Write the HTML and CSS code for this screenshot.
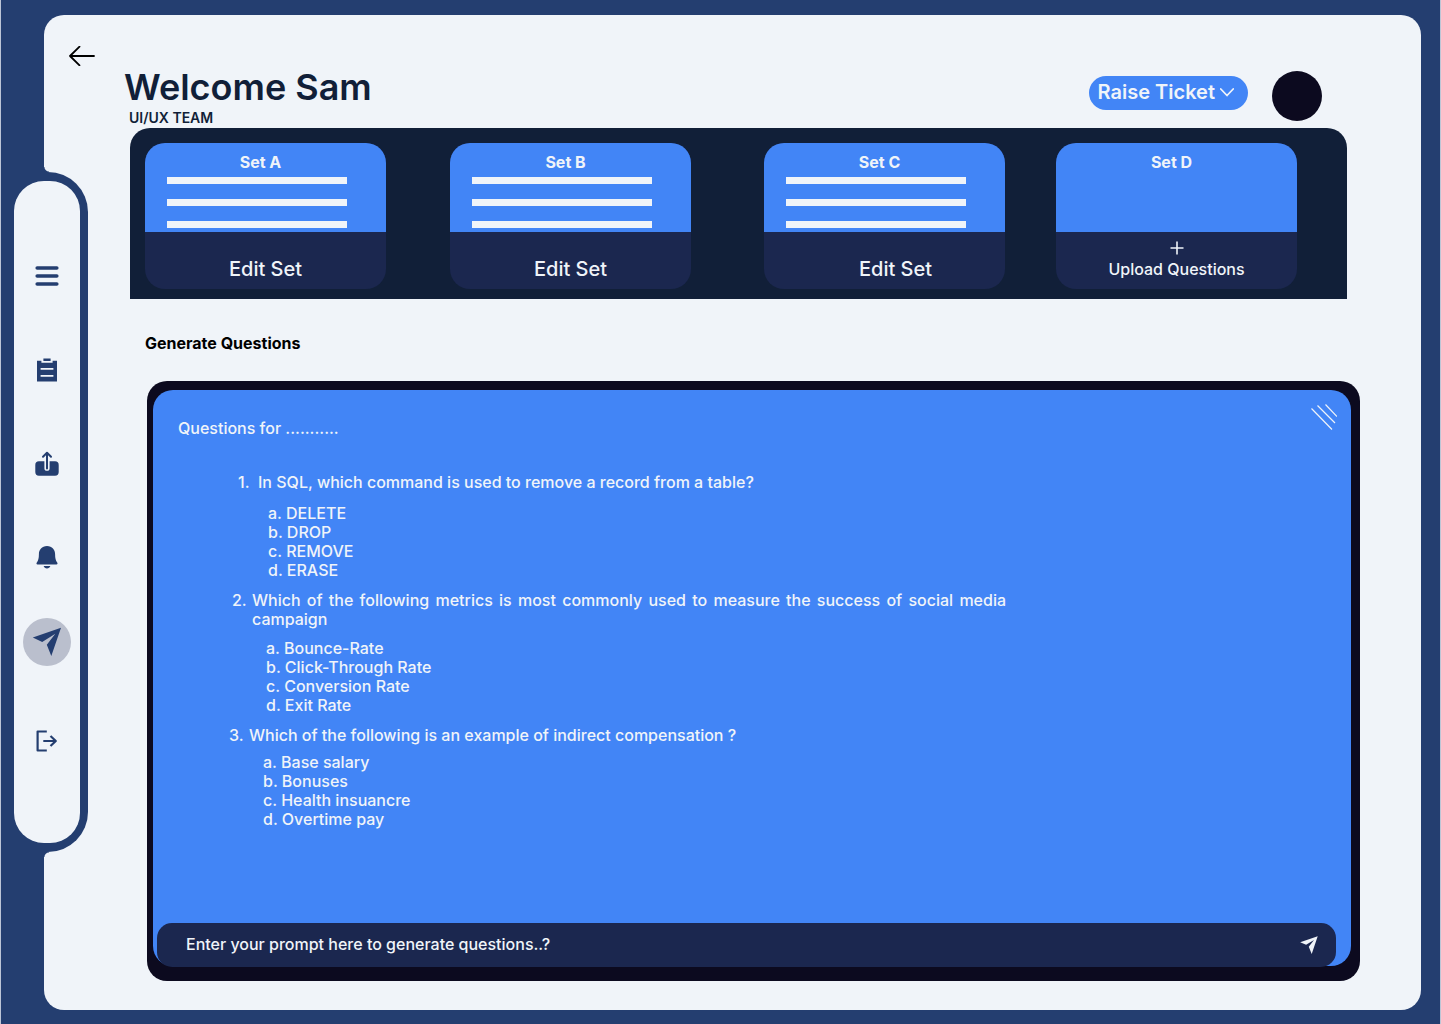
FILE: index.html
```html
<!DOCTYPE html>
<html lang="en">
<head>
  <meta charset="utf-8">
  <meta name="viewport" content="width=device-width, initial-scale=1">
  <title>Generate Questions</title>
  <link rel="stylesheet" href="styles.css">
</head>
<body>
  <div class="shell">
    <nav class="sidebar" aria-label="Main">
      <div class="sidebar-pill">
        <div class="nav-group">
          <button class="nav-item" type="button" aria-label="Menu">
            <svg width="24" height="24" viewBox="0 0 24 24"><path d="M2.2 4h19.6M2.2 12h19.6M2.2 20h19.6" fill="none" stroke="currentColor" stroke-width="3.6" stroke-linecap="round"/></svg>
          </button>
          <button class="nav-item" type="button" aria-label="Tests">
            <svg width="24" height="24" viewBox="0 0 24 24"><path d="M8.4.6h7.2V3H8.400zM2 2.800h4.400v1.900h11.200V2.800H22v20.800H2zM5.600 9.900v1.800h12.800V9.900zM5.600 17v1.800h12.800V17z" fill="currentColor" fill-rule="evenodd"/></svg>
          </button>
          <button class="nav-item" type="button" aria-label="Share">
            <svg width="24" height="26" viewBox="0 0 24 26"><path d="M4 10.200h5.400v7a2.600 2.600 0 0 0 5.200 0v-7H20a3.700 3.700 0 0 1 3.700 3.700v7.200A3.700 3.700 0 0 1 20 24.800H4a3.700 3.700 0 0 1-3.700-3.700v-7.200A3.700 3.700 0 0 1 4 10.200z" fill="currentColor"/><path d="M12 17.400V2.400M8 5.800l4-4 4 4" fill="none" stroke="currentColor" stroke-width="2" stroke-linecap="round" stroke-linejoin="round"/></svg>
          </button>
          <button class="nav-item" type="button" aria-label="Notifications">
            <svg width="22" height="24" viewBox="0 0 22 24"><path d="M11 0C5.800 0 2.900 3.700 2.900 8.300c0 4-.6 6.200-2.100 8.200-.6.900-.4 2 .7 2h19c1.100 0 1.300-1.100.7-2-1.500-2-2.100-4.200-2.100-8.200C19.100 3.700 16.200 0 11 0zM7.600 20h6.800c-.5 1.400-1.800 2.400-3.400 2.400s-2.900-1-3.400-2.400z" fill="currentColor"/></svg>
          </button>
        </div>
        <div class="nav-group nav-group-end">
          <button class="nav-item nav-item-active" type="button" aria-label="Generate">
            <svg width="30" height="30" viewBox="0 0 30 30"><path d="M29 .8.8 10.400l9.400 4.500L23.300 6.800 14.800 17.800l4.500 11.200z" fill="currentColor"/></svg>
          </button>
          <button class="nav-item" type="button" aria-label="Log out">
            <svg width="22" height="22" viewBox="0 0 22 22"><path d="M10.800 1.500H1.600v19h9.200M7.300 11H20M14.500 6l5.300 5-5.300 5" fill="none" stroke="currentColor" stroke-width="2.200" stroke-linejoin="round"/></svg>
          </button>
        </div>
      </div>
    </nav>

    <main class="panel">
      <div class="back-row">
        <button class="back" type="button" aria-label="Back">
          <svg width="26" height="20" viewBox="0 0 26 20"><path d="M25 10H1M10.500.700 1 10l9.500 9.300" fill="none" stroke="currentColor" stroke-width="1.800" stroke-linecap="round" stroke-linejoin="round"/></svg>
        </button>
      </div>

      <header class="header">
        <div>
          <h1 class="title">Welcome Sam</h1>
          <p class="team">UI/UX TEAM</p>
        </div>
        <div class="actions">
          <button class="ticket" type="button">Raise Ticket
            <svg width="14" height="9" viewBox="0 0 14 9"><path d="M.8 1 7 7.500 13.200 1" fill="none" stroke="currentColor" stroke-width="1.800" stroke-linecap="round" stroke-linejoin="round"/></svg>
          </button>
          <button class="avatar" type="button" aria-label="Account"></button>
        </div>
      </header>

      <section class="sets" aria-label="Question sets">
        <article class="card">
          <div class="card-top">
            <h2 class="card-title">Set A</h2>
            <div class="line"></div><div class="line"></div><div class="line"></div>
          </div>
          <button class="card-action" type="button">Edit Set</button>
        </article>
        <article class="card">
          <div class="card-top">
            <h2 class="card-title">Set B</h2>
            <div class="line"></div><div class="line"></div><div class="line"></div>
          </div>
          <button class="card-action" type="button">Edit Set</button>
        </article>
        <article class="card">
          <div class="card-top">
            <h2 class="card-title">Set C</h2>
            <div class="line"></div><div class="line"></div><div class="line"></div>
          </div>
          <button class="card-action card-action-shifted" type="button">Edit Set</button>
        </article>
        <article class="card">
          <div class="card-top">
            <h2 class="card-title">Set D</h2>
          </div>
          <button class="card-action card-action-upload" type="button">
            <svg width="14" height="14" viewBox="0 0 14 14"><path d="M7 .5v13M.5 7h13" fill="none" stroke="currentColor" stroke-width="1.600"/></svg>
            Upload Questions
          </button>
        </article>
      </section>

      <h2 class="section-title">Generate Questions</h2>

      <section class="chat">
        <div class="chat-body">
          <div class="chat-head">
            <p class="chat-label">Questions for ...........</p>
            <svg width="26" height="26" viewBox="0 0 26 26"><path d="M.5 4.500 21 25.500M6.500 1.500 24 19M14.500.5l11.500 12" fill="none" stroke="currentColor" stroke-width="1.200"/></svg>
          </div>
          <ol class="questions">
            <li class="question question-first">
              <p class="prompt-text"><span>1.</span><span>In SQL, which command is used to remove a record from a table?</span></p>
              <ul class="options">
                <li>a. DELETE</li>
                <li>b. DROP</li>
                <li>c. REMOVE</li>
                <li>d. ERASE</li>
              </ul>
            </li>
            <li class="question question-second">
              <p class="prompt-text"><span>2.</span><span>Which of the following metrics is most commonly used to measure the success of social media campaign</span></p>
              <ul class="options">
                <li>a. Bounce-Rate</li>
                <li>b. Click-Through Rate</li>
                <li>c. Conversion Rate</li>
                <li>d. Exit Rate</li>
              </ul>
            </li>
            <li class="question">
              <p class="prompt-text"><span>3.</span><span>Which of the following is an example of indirect compensation ?</span></p>
              <ul class="options">
                <li>a. Base salary</li>
                <li>b. Bonuses</li>
                <li>c. Health insuancre</li>
                <li>d. Overtime pay</li>
              </ul>
            </li>
          </ol>
          <form class="composer">
            <input class="composer-input" type="text" aria-label="Prompt" placeholder="Enter your prompt here to generate questions..?">
            <button class="send" type="button" aria-label="Send">
              <svg width="18" height="18" viewBox="0 0 30 30"><path d="M29.500.3.3 10.400l9.900 4.300L23.300 6.800 14.600 18l4.900 12z" fill="currentColor"/></svg>
            </button>
          </form>
        </div>
      </section>
    </main>
  </div>
</body>
</html>
```
FILE: styles.css
```css
:root {
  --navy: #243e70;
  --paper: #f0f4f9;
  --blue: #4285f6;
  --ink: #111f38;
  --indigo: #1b274f;
  --black: #0c0a1f;
}

* {
  box-sizing: border-box;
  margin: 0;
  padding: 0;
}

body {
  background: var(--navy);
  color: var(--ink);
  font-family: Inter, "Liberation Sans", sans-serif;
  font-size: 16px;
  line-height: 19px;
}

button,
input {
  border: 0;
  background: none;
  color: inherit;
  font: inherit;
}

button { cursor: pointer; }
svg { display: block; flex: none; }
ol, ul { list-style: none; }

.shell {
  display: flex;
  min-height: 100vh;
  padding: 15px 19px 14px 0;
  border: solid #bcc5d6;
  border-width: 0 1px;
}

/* Sidebar: navy tab that overlaps the panel edge */
.sidebar {
  position: relative;
  z-index: 1;
  flex: none;
  align-self: flex-start;
  width: 87px;
  margin: 157px -44px 0 0;
  padding: 9px 8px 9px 13px;
  border-radius: 0 40px 40px 0;
  background: var(--navy);
}

.sidebar::before,
.sidebar::after {
  content: "";
  position: absolute;
  left: 43px;
  width: 5px;
  height: 5px;
}

.sidebar::before {
  bottom: 100%;
  background: radial-gradient(circle at 100% 0, transparent 4px, var(--navy) 5px);
}

.sidebar::after {
  top: 100%;
  background: radial-gradient(circle at 100% 100%, transparent 4px, var(--navy) 5px);
}

.sidebar-pill {
  display: flex;
  flex-direction: column;
  align-items: center;
  gap: 36px;
  padding: 71px 0 78px;
  border-radius: 30px;
  background: var(--paper);
  color: var(--navy);
}

.nav-group {
  display: grid;
  gap: 46px;
}

.nav-group-end { gap: 51px; }

.nav-item {
  display: grid;
  place-items: center;
  width: 48px;
  height: 48px;
  border-radius: 50%;
}

.nav-item-active { background: #babfcd; }

/* Panel */
.panel {
  display: flex;
  flex: 1;
  flex-direction: column;
  min-width: 0;
  border-radius: 20px;
  background: var(--paper);
}

.back-row { padding: 31px 25px 0; }
.back { display: block; color: #000; }

.header {
  display: flex;
  justify-content: space-between;
  padding: 0 99px 0 80px;
}

.title {
  font-size: 36px;
  font-weight: 600;
  line-height: 43px;
}

.team {
  padding: 0 0 2px 5px;
  font-size: 14px;
  font-weight: 600;
  line-height: 17px;
}

.actions {
  display: flex;
  align-items: flex-start;
  gap: 24px;
  padding-top: 5px;
}

.ticket {
  display: flex;
  align-items: center;
  gap: 5px;
  height: 34px;
  margin-top: 5px;
  padding: 0 14px 2px 9px;
  border-radius: 17px;
  background: var(--blue);
  color: var(--paper);
  font-size: 20px;
  font-weight: 600;
}

.avatar {
  width: 50px;
  height: 50px;
  border-radius: 50%;
  background: var(--black);
}

/* Question sets */
.sets {
  display: grid;
  grid-template-columns: 305fr 314fr 292fr 291fr;
  margin: 0 74px 0 86px;
  padding: 15px 0 10px 15px;
  border-radius: 20px 20px 0 0;
  background: var(--ink);
}

.card {
  width: 241px;
  border-radius: 20px;
  overflow: hidden;
  background: var(--indigo);
  color: var(--paper);
}

.card-top {
  display: grid;
  align-content: start;
  gap: 15px;
  height: 89px;
  padding: 10px 22px 0;
  background: var(--blue);
}

.card-title {
  height: 9px;
  padding-right: 10px;
  font-size: 16px;
  font-weight: 700;
  text-align: center;
}

.line {
  width: 180px;
  height: 7px;
  background: var(--paper);
}

.card-action {
  display: flex;
  flex-direction: column;
  align-items: center;
  justify-content: flex-end;
  width: 100%;
  height: 57px;
  padding-bottom: 8px;
  font-size: 20px;
  font-weight: 500;
  line-height: 24px;
}

.card-action-shifted { padding-left: 22px; }

.card-action-upload {
  gap: 2px;
  font-size: 16px;
}

.section-title {
  padding: 35px 101px 28px;
  color: #000;
  font-size: 16px;
  font-weight: 700;
}

/* Chat */
.chat {
  display: flex;
  flex: 1;
  margin: 0 61px 29px 103px;
  padding: 9px 9px 15px 6px;
  border-radius: 20px;
  background: var(--black);
}

.chat-body {
  display: flex;
  flex: 1;
  flex-direction: column;
  border-radius: 20px;
  background: var(--blue);
  color: var(--paper);
  font-weight: 500;
}

.chat-head {
  display: flex;
  justify-content: space-between;
  padding: 14px 14px 0 25px;
}

.chat-label { padding-top: 15px; }

.questions {
  display: grid;
  gap: 11px;
  max-width: 853px;
  padding: 35px 0 24px 76px;
}

.question-first { padding-left: 9px; }
.question-second { padding-left: 3px; }

.prompt-text {
  display: grid;
  grid-template-columns: 20px 1fr;
  text-align: justify;
}

.options { padding: 8px 0 0 34px; }
.question-first .options { padding: 12px 0 0 30px; }
.question-second .options { padding-top: 10px; }

.composer {
  display: flex;
  align-items: center;
  height: 44px;
  margin: auto 15px -1px 4px;
  padding: 0 18px 0 29px;
  border-radius: 15px;
  background: var(--indigo);
}

.composer-input {
  flex: 1;
  min-width: 0;
  padding-bottom: 2px;
  outline: 0;
}

.composer-input::placeholder {
  color: var(--paper);
  opacity: 1;
}
```
